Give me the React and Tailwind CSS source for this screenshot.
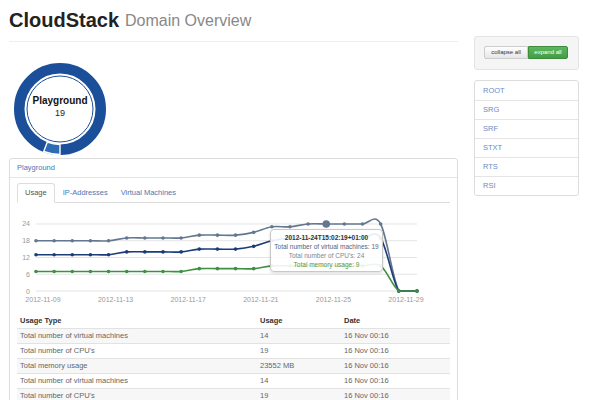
import React from "react";

const cpus = [18, 18, 18, 18, 18, 19, 19, 19, 19, 20, 20, 20, 21, 23, 23, 24, 24, 24, 24, 24, 0, 0];
const vms = [13, 13, 13, 13, 13, 14, 14, 14, 14, 15, 15, 15, 16, 18, 19, 19, 19, 19, 19, 19, 0, 0];
const mem = [7, 7, 7, 7, 7, 7, 7, 7, 7, 8, 8, 8, 8, 9, 9, 9, 9, 9, 9, 9, 0, 0];

const X = (i) => 36 + i * 18.14;
const Y = (v) => 291 - v * 2.7917;

function curve(vals) {
  const pts = vals.map((v, i) => [X(i), Y(v)]);
  let d = `M${pts[0][0]},${pts[0][1]}`;
  for (let i = 0; i < pts.length - 1; i++) {
    const p0 = pts[i - 1] || pts[i];
    const p1 = pts[i];
    const p2 = pts[i + 1];
    const p3 = pts[i + 2] || p2;
    const t = 1 / 6;
    const c1 = [p1[0] + (p2[0] - p0[0]) * t, Math.min(291, p1[1] + (p2[1] - p0[1]) * t)];
    const c2 = [p2[0] - (p3[0] - p1[0]) * t, Math.min(291, p2[1] - (p3[1] - p1[1]) * t)];
    d += ` C${c1[0]},${c1[1]} ${c2[0]},${c2[1]} ${p2[0]},${p2[1]}`;
  }
  return d;
}

const series = [
  { vals: cpus, color: "#637790" },
  { vals: vms, color: "#1c3c78" },
  { vals: mem, color: "#3d9140" },
];

const rows = [
  ["Total number of virtual machines", "14", "16 Nov 00:16"],
  ["Total number of CPU's", "19", "16 Nov 00:16"],
  ["Total memory usage", "23552 MB", "16 Nov 00:16"],
  ["Total number of virtual machines", "14", "16 Nov 00:16"],
  ["Total number of CPU's", "19", "16 Nov 00:16"],
];

const domains = ["ROOT", "SRG", "SRF", "STXT", "RTS", "RSI"];

function Donut() {
  const cx = 48;
  const pt = (r, a) => {
    const rad = (a * Math.PI) / 180;
    return [cx + r * Math.sin(rad), cx - r * Math.cos(rad)];
  };
  const ro = 45.5, ri = 35.5;
  const [a1, a2] = [180, 201];
  const o1 = pt(ro, a1), o2 = pt(ro, a2), i2 = pt(ri, a2), i1 = pt(ri, a1);
  const seg = `M${o1} A${ro},${ro} 0 0 1 ${o2} L${i2} A${ri},${ri} 0 0 0 ${i1} Z`;
  return (
    <div className="grid w-[96px] h-[96px]">
      <svg width="96" height="96" viewBox="0 0 96 96" className="[grid-area:1/1]">
        <circle cx="48" cy="48" r="40.75" fill="none" stroke="#1b4f99" strokeWidth="10.5" />
        <path d={seg} fill="#2e6db3" stroke="#fff" strokeWidth="1.4" />
        <circle cx="48" cy="48" r="33" fill="none" stroke="#1b4f99" strokeWidth="1" />
      </svg>
      <div className="[grid-area:1/1] flex flex-col items-center justify-center pb-[5px]">
        <span className="text-[10px] font-bold leading-[12px] text-[#111]">Playground</span>
        <span className="text-[9px] leading-[12px] text-[#222]">19</span>
      </div>
    </div>
  );
}

function Chart() {
  return (
    <div className="relative h-[111px]">
      <svg width="433" height="111" viewBox="17 203 433 111">
        {[0, 6, 12, 18, 24].map((v) => (
          <g key={v}>
            <line x1="36" x2="417" y1={Y(v)} y2={Y(v)} stroke="#e4e4e4" strokeWidth="1" />
            <text x="30" y={Y(v) + 2.5} textAnchor="end" fontSize="7" fill="#999">{v}</text>
          </g>
        ))}
        {["2012-11-09", "2012-11-13", "2012-11-17", "2012-11-21", "2012-11-25", "2012-11-29"].map((l, k) => (
          <text key={l} x={43 + k * 72.6} y="302" textAnchor="middle" fontSize="7" fill="#999">{l}</text>
        ))}
        {series.map((s, n) => (
          <g key={n}>
            <path d={curve(s.vals)} fill="none" stroke={s.color} strokeWidth="1.6" />
            {s.vals.map((v, i) => (
              <circle key={i} cx={X(i)} cy={Y(v)} r="1.8" fill={s.color} />
            ))}
          </g>
        ))}
        <circle cx={X(16)} cy={Y(24)} r="3.8" fill="#637790" />
      </svg>
      <div className="absolute left-[253px] top-[26px] w-[113px] h-[43px] rounded-[4px] border border-[#c8c8c8] bg-white/90 shadow-[0_1px_3px_rgba(0,0,0,0.15)] pt-[3px] text-center text-[6.5px] leading-[9px] whitespace-nowrap">
        <div className="font-bold text-[#333]">2012-11-24T15:02:19+01:00</div>
        <div className="text-[#55637a]">Total number of virtual machines: 19</div>
        <div className="text-[#7d8794]">Total number of CPU's: 24</div>
        <div className="text-[#55963f]">Total memory usage: 9</div>
      </div>
    </div>
  );
}

export default function App() {
  return (
    <div className="flex w-[600px] h-[400px] overflow-hidden bg-white font-['Liberation_Sans',Arial,sans-serif]">
      <main className="ml-[9px] w-[449px] shrink-0">
        {/* Header */}
        <div className="h-[42px] border-b border-[#eeeeee] flex items-end gap-[6px] pb-[10px]">
          <span className="text-[20px] font-bold leading-[22px] text-[#222]">CloudStack</span>
          <span className="text-[16px] leading-[20px] text-[#888]">Domain Overview</span>
        </div>

        {/* Donut */}
        <div className="h-[116px] pt-[19px] pl-[3px]">
          <Donut />
        </div>

        {/* Domain panel */}
        <div className="border border-[#dddddd] rounded-[3px]">
          <div className="h-[19px] border-b border-[#e5e5e5] px-[7px] flex items-center text-[7.5px] text-[#4a77b4]">
            Playground
          </div>
          <div className="px-[7px] pt-[5px]">
            <div className="flex h-[20px] border-b border-[#dddddd] text-[7.5px]">
              <div className="px-[7px] flex items-center border border-[#dddddd] border-b-white -mb-px bg-white rounded-t-[3px] text-[#555]">
                Usage
              </div>
              <div className="px-[8px] flex items-center text-[#4a77b4]">IP-Addresses</div>
              <div className="px-[5px] flex items-center text-[#4a77b4]">Virtual Machines</div>
            </div>

            <Chart />

            <div className="text-[7.5px]">
              <div className="flex h-[14px] items-center font-bold text-[#333]">
                <div className="w-[243px] pl-[3px]">Usage Type</div>
                <div className="w-[84px]">Usage</div>
                <div>Date</div>
              </div>
              {rows.map((r, i) => (
                <div
                  key={i}
                  className={`flex h-[15px] items-center border-t border-[#e2e2e2] text-[#666] ${
                    i % 2 === 0 ? "bg-[#f7f7f7]" : "bg-white"
                  }`}
                >
                  <div className="w-[243px] pl-[3px]">{r[0]}</div>
                  <div className="w-[84px]">{r[1]}</div>
                  <div>{r[2]}</div>
                </div>
              ))}
            </div>
          </div>
        </div>
      </main>

      {/* Sidebar */}
      <aside className="ml-[16px] w-[105px] shrink-0 pt-[36px] flex flex-col gap-[10px]">
        <div className="h-[34px] bg-[#f5f5f5] border border-[#e3e3e3] rounded-[3px] pl-[9px] pt-[9px]">
          <div className="flex h-[13px] text-[6px]">
            <button className="w-[44px] border border-[#cccccc] rounded-l-[2px] bg-gradient-to-b from-white to-[#e6e6e6] text-[#333]">
              collapse all
            </button>
            <button className="w-[40px] border border-[#3d8b3d] rounded-r-[2px] bg-gradient-to-b from-[#5cb85c] to-[#449d44] text-white">
              expand all
            </button>
          </div>
        </div>
        <div className="border border-[#dddddd] rounded-[3px] flex flex-col">
          {domains.map((d, i) => (
            <div
              key={d}
              className={`h-[19px] px-[8px] flex items-center text-[7.5px] text-[#6a8cc0] ${
                i > 0 ? "border-t border-[#e5e5e5]" : ""
              }`}
            >
              {d}
            </div>
          ))}
        </div>
      </aside>
    </div>
  );
}
